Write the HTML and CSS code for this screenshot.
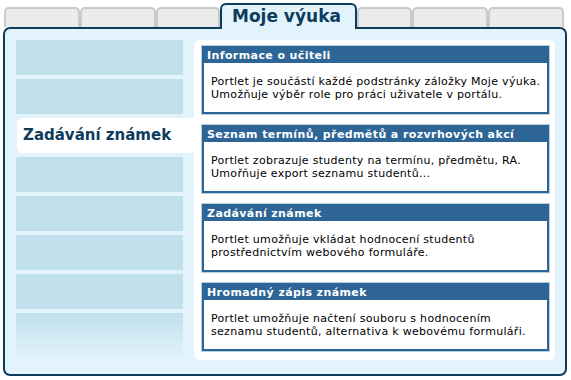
FILE: index.html
```html
<!DOCTYPE html>
<html lang="cs">
<head>
<meta charset="utf-8">
<link rel="stylesheet" href="styles.css">
</head>
<body>
<div class="page">
  <div class="tabs">
    <div class="tab w76"></div>
    <div class="tab w76"></div>
    <div class="tab w64"></div>
    <div class="tab-active">Moje výuka</div>
    <div class="tab w55"></div>
    <div class="tab w76"></div>
    <div class="tab w76"></div>
  </div>
  <div class="panel">
    <div class="nav">
      <div class="nav-item"></div>
      <div class="nav-item"></div>
      <div class="nav-item active">Zadávání známek</div>
      <div class="nav-item"></div>
      <div class="nav-item"></div>
      <div class="nav-item"></div>
      <div class="nav-item"></div>
      <div class="nav-item last"></div>
    </div>
    <div class="content">
      <div class="portlet">
        <div class="portlet-head">Informace o učiteli</div>
        <div class="portlet-body">Portlet je součástí každé podstránky záložky Moje výuka.<br>Umožňuje výběr role pro práci uživatele v portálu.</div>
      </div>
      <div class="portlet">
        <div class="portlet-head">Seznam termínů, předmětů a rozvrhových akcí</div>
        <div class="portlet-body">Portlet zobrazuje studenty na termínu, předmětu, RA.<br>Umořňuje export seznamu studentů...</div>
      </div>
      <div class="portlet">
        <div class="portlet-head">Zadávání známek</div>
        <div class="portlet-body">Portlet umožňuje vkládat hodnocení studentů<br>prostřednictvím webového formuláře.</div>
      </div>
      <div class="portlet">
        <div class="portlet-head">Hromadný zápis známek</div>
        <div class="portlet-body">Portlet umožňuje načtení souboru s hodnocením<br>seznamu studentů, alternativa k webovému formuláři.</div>
      </div>
    </div>
  </div>
</div>
</body>
</html>
```

FILE: styles.css
```css
html, body {
  margin: 0;
  padding: 0;
  background: #ffffff;
}
body {
  font-family: "DejaVu Sans", Verdana, sans-serif;
  color: #000;
}
.page {
  width: 571px;
  height: 380px;
  padding: 3px 0 0 3px;
  box-sizing: border-box;
}
.tabs {
  display: flex;
  align-items: flex-end;
  height: 24px;
  padding-left: 1px;
}
.tab {
  height: 20px;
  box-sizing: border-box;
  background: #ebebeb;
  border: 2px solid #c9c9c9;
  border-bottom: none;
  border-radius: 5px 5px 0 0;
}
.w76 { width: 76px; }
.w64 { width: 64px; }
.w55 { width: 55px; }
.tab-active {
  position: relative;
  z-index: 2;
  width: 137px;
  height: 26px;
  margin-bottom: -2px;
  box-sizing: border-box;
  background: #e2f3fc;
  border: 2px solid #0c3c5a;
  border-bottom: none;
  border-radius: 6px 6px 0 0;
  color: #0d3b5c;
  font-weight: bold;
  font-size: 17px;
  line-height: 22px;
  padding-left: 10px;
}
.panel {
  width: 564px;
  height: 349px;
  box-sizing: border-box;
  background: #e2f3fc;
  border: 2px solid #0c3c5a;
  border-radius: 7px;
  display: flex;
  padding: 11px 10px 14px 11px;
}
.nav {
  width: 178px;
  display: flex;
  flex-direction: column;
  gap: 4px;
}
.nav-item {
  width: 167px;
  height: 35px;
  background: #c0e0ec;
}
.nav-item.active {
  width: 178px;
  margin-left: 1px;
  background: #ffffff;
  border-radius: 6px 0 0 6px;
  color: #0d3b5c;
  font-weight: bold;
  font-size: 15px;
  line-height: 35px;
  padding-left: 6px;
  box-sizing: border-box;
}
.nav-item.last {
  height: 47px;
  background: linear-gradient(#c0e0ec, #e2f3fc);
}
.content {
  width: 361px;
  height: 320px;
  box-sizing: border-box;
  background: #ffffff;
  border-radius: 6px;
  padding: 6px 6px 0 8px;
  display: flex;
  flex-direction: column;
  gap: 11px;
}
.portlet {
  height: 68px;
  box-sizing: border-box;
  border: 2px solid #2c6596;
  box-shadow: 0 0 0 1px #b9cedd;
  background: #ffffff;
}
.portlet-head {
  background: #2c6596;
  color: #ffffff;
  font-weight: bold;
  font-size: 11px;
  line-height: 15px;
  height: 15px;
  padding-left: 3px;
  letter-spacing: 0.4px;
  white-space: nowrap;
}
.portlet-body {
  font-size: 11px;
  line-height: 13px;
  letter-spacing: 0.3px;
  white-space: nowrap;
  padding: 12px 0 0 7px;
}
```
